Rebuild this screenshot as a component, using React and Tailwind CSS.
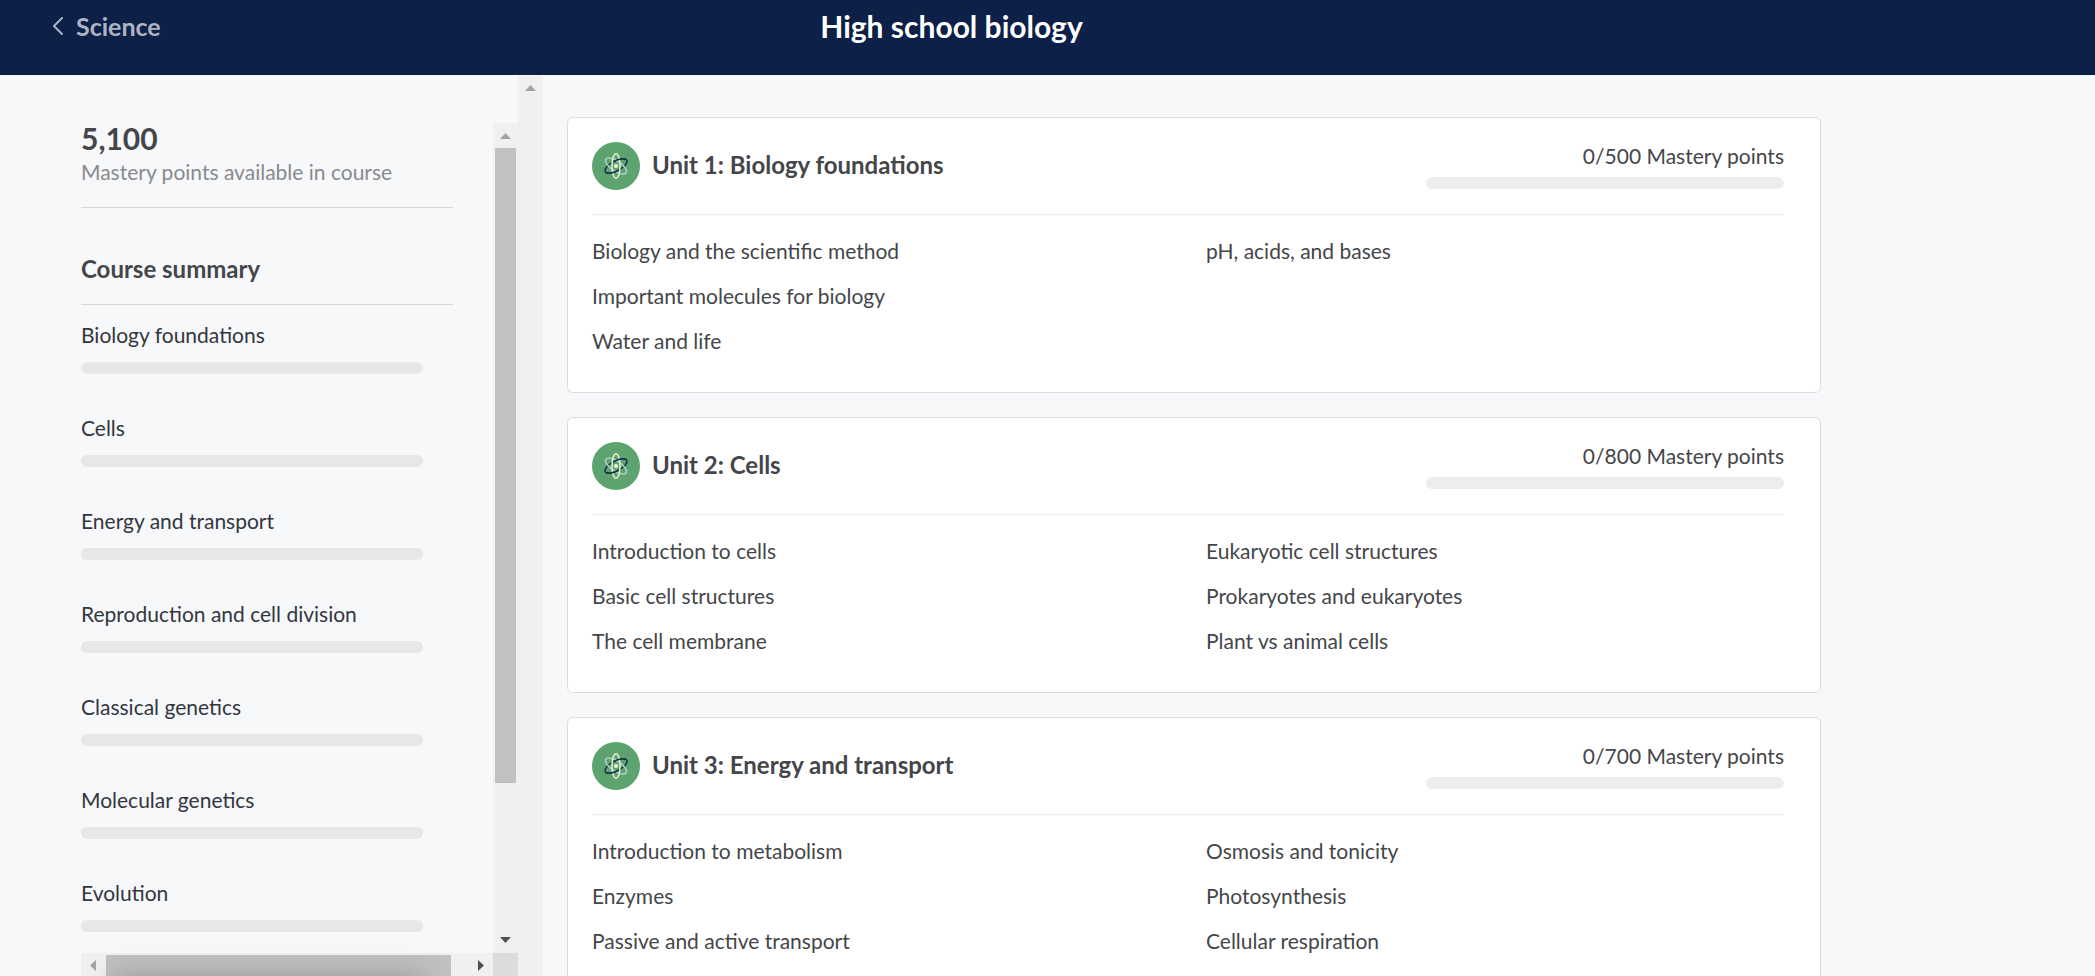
const summary = [
  "Biology foundations",
  "Cells",
  "Energy and transport",
  "Reproduction and cell division",
  "Classical genetics",
  "Molecular genetics",
  "Evolution",
];

const units = [
  {
    title: "Unit 1: Biology foundations",
    points: 500,
    lessons: [
      ["Biology and the scientific method", "Important molecules for biology", "Water and life"],
      ["pH, acids, and bases"],
    ],
  },
  {
    title: "Unit 2: Cells",
    points: 800,
    lessons: [
      ["Introduction to cells", "Basic cell structures", "The cell membrane"],
      ["Eukaryotic cell structures", "Prokaryotes and eukaryotes", "Plant vs animal cells"],
    ],
  },
  {
    title: "Unit 3: Energy and transport",
    points: 700,
    lessons: [
      ["Introduction to metabolism", "Enzymes", "Passive and active transport"],
      ["Osmosis and tonicity", "Photosynthesis", "Cellular respiration"],
    ],
  },
];

function AtomIcon() {
  return (
    <svg viewBox="0 0 48 48" className="size-12 shrink-0" fill="none" aria-hidden="true">
      <circle cx="24" cy="24" r="24" fill="#5ca36f" />
      <ellipse cx="24" cy="24" rx="5" ry="12.2" stroke="#14304f" strokeWidth="1.4" transform="rotate(62 24 24)" />
      <ellipse cx="24" cy="24" rx="5" ry="12.2" stroke="#a9cfcb" strokeWidth="1.6" transform="rotate(-56 24 24)" />
      <ellipse cx="24" cy="24" rx="4" ry="12.2" stroke="#e3ecca" strokeWidth="1.6" />
      <g stroke="#14304f" strokeWidth="1.4" transform="rotate(62 24 24)">
        <path d="M19 24C19 17.200 21.200 11.800 24 11.800" />
        <path d="M29 24C29 30.800 26.800 36.200 24 36.200" />
      </g>
      <circle cx="24" cy="24" r="2" fill="#f4f5da" />
    </svg>
  );
}

function ScrollButton({ label, points, className }) {
  return (
    <button type="button" aria-label={label} className="flex size-[25px] shrink-0 items-center justify-center">
      <svg viewBox="0 0 11 11" className={`size-[11px] ${className}`} fill="currentColor" aria-hidden="true">
        <polygon points={points} />
      </svg>
    </button>
  );
}

const UP = "5.5,3 11,9 0,9";
const DOWN = "0,2 11,2 5.5,8";
const LEFT = "2,5.5 8,0 8,11";
const RIGHT = "3,0 9,5.5 3,11";

function Sidebar() {
  return (
    <aside className="flex h-[calc(100vh-73px)] w-[543px] shrink-0">
      <div className="flex flex-1 flex-col pt-12 pl-[81px]">
        <div className="flex min-h-0 flex-1">
          <div className="min-w-0 flex-1">
            <div className="mr-10 border-b border-[#d6d8da] pb-4">
              <p className="text-[30px] leading-[30px] font-bold text-[#444649]">5,100</p>
              <p className="text-[21px] leading-[38px] text-[#888a8e]">Mastery points available in course</p>
            </div>
            <h2 className="mr-10 border-b border-[#d6d8da] pt-[47px] pb-[21px] text-2xl leading-7 font-bold text-[#444649]">
              Course summary
            </h2>
            <ul className="pt-[15px]">
              {summary.map((name) => (
                <li key={name} className="h-[93px]">
                  <a href="#" className="block text-[21px] leading-[30px] text-[#33363e]">{name}</a>
                  <div className="mt-3 mr-[70px] h-3 rounded-full bg-[#e6e7e8]" />
                </li>
              ))}
            </ul>
          </div>
          <div className="flex w-[25px] flex-col bg-[#f0f0f0]">
            <ScrollButton label="Scroll up" points={UP} className="text-[#a3a3a3]" />
            <div className="min-h-0 flex-1 px-0.5">
              <div className="h-[81.4%] bg-[#c1c1c1]" />
            </div>
            <ScrollButton label="Scroll down" points={DOWN} className="text-[#505050]" />
          </div>
        </div>
        <div className="relative flex h-[25px] bg-[#f0f0f0]">
          <ScrollButton label="Scroll left" points={LEFT} className="text-[#a3a3a3]" />
          <div className="flex-1 py-0.5">
            <div className="h-full w-[95.3%] bg-[#c1c1c1]" />
          </div>
          <ScrollButton label="Scroll right" points={RIGHT} className="text-[#505050]" />
          <div className="w-[25px] bg-[#dcdcdc]" />
          <div className="pointer-events-none absolute top-full right-24 left-8 h-10 shadow-[0_0_32px_rgba(0,0,0,0.26)]" />
        </div>
      </div>
      <div className="w-[25px] bg-[#f0f0f0]">
        <ScrollButton label="Scroll page up" points={UP} className="text-[#a3a3a3]" />
      </div>
    </aside>
  );
}

function UnitCard({ title, points, lessons }) {
  return (
    <section className="rounded-md border border-[#dadcdf] bg-white pt-6 pr-9 pb-[29px] pl-6">
      <div className="flex items-start justify-between border-b border-[#eceded] pb-6">
        <div className="flex items-center gap-3">
          <AtomIcon />
          <h2 className="pb-[3px] text-2xl leading-7 font-bold text-[#444649]">
            <a href="#">{title}</a>
          </h2>
        </div>
        <div className="w-[358px]">
          <p className="text-right text-[21px] leading-7 text-[#444649]">0/{points} Mastery points</p>
          <div className="mt-[7px] h-3 rounded-full bg-[#ededed]" />
        </div>
      </div>
      <div className="grid grid-cols-2 gap-9 pt-[13px]">
        {lessons.map((column) => (
          <ul key={column[0]} className="text-[21px] leading-[45px] text-[#444649]">
            {column.map((name) => (
              <li key={name}>
                <a href="#">{name}</a>
              </li>
            ))}
          </ul>
        ))}
      </div>
    </section>
  );
}

export default function App() {
  return (
    <div className="h-screen overflow-hidden bg-[#f7f8fa] font-[Lato,sans-serif]">
      <header className="h-[75px] bg-[#0c2048]">
        <div className="grid max-w-[1903px] grid-cols-[1fr_auto_1fr] items-center px-[52px] pt-2">
          <a href="#" className="flex items-center gap-3 text-[25px] leading-9 font-bold text-[#adb4c2]">
            <svg viewBox="0 0 12 18" className="h-[18px] w-3" fill="none" stroke="currentColor" strokeWidth="2" strokeLinecap="round" strokeLinejoin="round" aria-hidden="true">
              <path d="M10 1 2 9l8 8" />
            </svg>
            Science
          </a>
          <h1 className="text-[30px] leading-9 font-bold text-white">High school biology</h1>
        </div>
      </header>
      <div className="flex items-start">
        <Sidebar />
        <main className="flex max-w-[1278px] min-w-0 flex-1 flex-col gap-6 pt-[42px] pl-6">
          {units.map((unit) => (
            <UnitCard key={unit.title} {...unit} />
          ))}
        </main>
      </div>
    </div>
  );
}
